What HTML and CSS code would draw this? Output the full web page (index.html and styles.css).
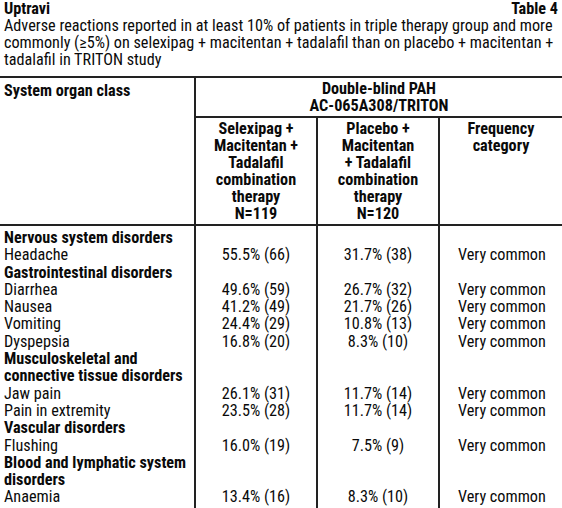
FILE: index.html
```html
<!DOCTYPE html>
<html lang="en">

<head>
    <meta charset="UTF-8">
    <meta name="viewport" content="width=device-width, initial-scale=1.0">
    <title>Uptravi Table 4</title>
    <link rel="stylesheet" href="styles.css">
</head>

<body>
    <div class="caption">
        <div class="caption-top">
            <span>Uptravi</span>
            <span>Table 4</span>
        </div>
        <p class="caption-text">Adverse reactions reported in at least 10% of patients in triple therapy group and more<br>commonly (&ge;5%) on selexipag + macitentan + tadalafil than on placebo + macitentan +<br>tadalafil in TRITON study</p>
    </div>

    <table class="reactions">
        <colgroup>
            <col class="col-class">
            <col class="col-num">
            <col class="col-num">
            <col class="col-freq">
        </colgroup>
        <thead>
            <tr class="head-top">
                <th rowspan="2" class="th-class">System organ class</th>
                <th colspan="3" class="th-study">Double-blind PAH<br>AC-065A308/TRITON</th>
            </tr>
            <tr class="head-sub">
                <th>Selexipag +<br>Macitentan +<br>Tadalafil<br>combination<br>therapy<br>N=119</th>
                <th>Placebo +<br>Macitentan<br>+ Tadalafil<br>combination<br>therapy<br>N=120</th>
                <th>Frequency<br>category</th>
            </tr>
        </thead>
        <tbody>
            <tr class="first">
                <td class="soc">Nervous system disorders</td>
                <td></td><td></td><td></td>
            </tr>
            <tr>
                <td>Headache</td>
                <td class="num">55.5% (66)</td>
                <td class="num">31.7% (38)</td>
                <td class="freq">Very common</td>
            </tr>
            <tr>
                <td class="soc">Gastrointestinal disorders</td>
                <td></td><td></td><td></td>
            </tr>
            <tr>
                <td>Diarrhea</td>
                <td class="num">49.6% (59)</td>
                <td class="num">26.7% (32)</td>
                <td class="freq">Very common</td>
            </tr>
            <tr>
                <td>Nausea</td>
                <td class="num">41.2% (49)</td>
                <td class="num">21.7% (26)</td>
                <td class="freq">Very common</td>
            </tr>
            <tr>
                <td>Vomiting</td>
                <td class="num">24.4% (29)</td>
                <td class="num">10.8% (13)</td>
                <td class="freq">Very common</td>
            </tr>
            <tr>
                <td>Dyspepsia</td>
                <td class="num">16.8% (20)</td>
                <td class="num">8.3% (10)</td>
                <td class="freq">Very common</td>
            </tr>
            <tr>
                <td class="soc">Musculoskeletal and<br>connective tissue disorders</td>
                <td></td><td></td><td></td>
            </tr>
            <tr>
                <td>Jaw pain</td>
                <td class="num">26.1% (31)</td>
                <td class="num">11.7% (14)</td>
                <td class="freq">Very common</td>
            </tr>
            <tr>
                <td>Pain in extremity</td>
                <td class="num">23.5% (28)</td>
                <td class="num">11.7% (14)</td>
                <td class="freq">Very common</td>
            </tr>
            <tr>
                <td class="soc">Vascular disorders</td>
                <td></td><td></td><td></td>
            </tr>
            <tr>
                <td>Flushing</td>
                <td class="num">16.0% (19)</td>
                <td class="num">7.5% (9)</td>
                <td class="freq">Very common</td>
            </tr>
            <tr>
                <td class="soc">Blood and lymphatic system<br>disorders</td>
                <td></td><td></td><td></td>
            </tr>
            <tr class="last">
                <td>Anaemia</td>
                <td class="num">13.4% (16)</td>
                <td class="num">8.3% (10)</td>
                <td class="freq">Very common</td>
            </tr>
        </tbody>
    </table>
</body>

</html>
```

FILE: styles.css
```css
body {
    margin: 0;
    background: #ffffff;
    color: #0a0a0a;
    font-family: "Liberation Sans Narrow", "Roboto Condensed", "Noto Sans", "DejaVu Sans Condensed", sans-serif;
    font-stretch: 75%;
    font-size: 16.2px;
    line-height: 17px;
}

.caption {
    padding: 0 4px 8px 4px;
}

.caption-top {
    display: flex;
    justify-content: space-between;
    font-weight: bold;
}

.caption-text {
    margin: 0;
    white-space: nowrap;
}

.reactions {
    width: 100%;
    border-collapse: collapse;
    table-layout: fixed;
    border-top: 2px solid #222222;
    border-bottom: 2px solid #222222;
}

.col-class {
    width: 195px;
}

.col-num {
    width: 122px;
}

th {
    font-weight: bold;
    text-align: center;
    vertical-align: top;
    padding: 2px 4px;
    border-left: 2px solid #222222;
}

.th-class {
    text-align: left;
    border-left: 0;
    padding-top: 4px;
}

.th-study {
    padding-bottom: 2px;
    border-bottom: 2px solid #222222;
}

.head-sub th {
    padding-bottom: 2px;
}

thead {
    border-bottom: 2px solid #222222;
}

td {
    padding: 0 4px;
    line-height: 17.3px;
    vertical-align: top;
    border-left: 2px solid #222222;
    white-space: nowrap;
}

td:first-child {
    border-left: 0;
}

.first td {
    padding-top: 3px;
}

.last td {
    padding-bottom: 2px;
}

.soc {
    font-weight: bold;
}

.num {
    text-align: center;
}

.freq {
    padding-left: 18px;
}
```
